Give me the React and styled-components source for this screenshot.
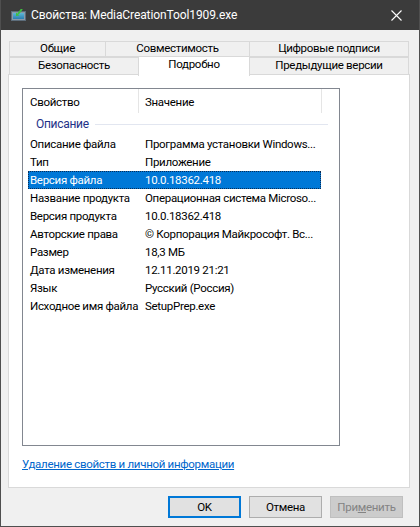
import React from "react";
import styled, { createGlobalStyle } from "styled-components";

const GlobalStyle = createGlobalStyle`
  html, body {
    margin: 0;
    padding: 0;
    background: #f0f0f0;
  }
  body {
    font-family: Roboto, "Noto Sans", sans-serif;
    font-size: 11.5px;
    letter-spacing: -0.3px;
    color: #000;
  }
`;

const Window = styled.div`
  width: 420px;
  height: 527px;
  box-sizing: border-box;
  border: 1px solid #4f4f4f;
  border-top: none;
  background: #f0f0f0;
  display: flex;
  flex-direction: column;
`;

const TitleBar = styled.div`
  height: 30px;
  flex-shrink: 0;
  background: #3b3b3b;
  display: flex;
  align-items: center;
  padding-left: 10px;
  color: #fff;
`;

const TitleText = styled.span`
  margin-left: 5px;
  font-size: 12px;
  letter-spacing: -0.1px;
  flex: 1;
`;

const CloseButton = styled.div`
  width: 46px;
  height: 30px;
  display: flex;
  align-items: center;
  justify-content: center;
`;

const Body = styled.div`
  padding: 11px 9px 0 7px;
  display: flex;
  flex-direction: column;
`;

const Tabs = styled.div`
  margin-left: 1px;
  width: 400px;
  display: flex;
  flex-direction: column;
`;

const TabRow = styled.div`
  display: flex;
  height: ${(p) => p.$h}px;
`;

const Tab = styled.div`
  box-sizing: border-box;
  width: ${(p) => p.$w}px;
  height: ${(p) => (p.$active ? p.$h + 2 : p.$h)}px;
  margin-top: ${(p) => (p.$active ? -1 : 0)}px;
  margin-right: -1px;
  border: 1px solid #d9d9d9;
  border-bottom: ${(p) => (p.$active ? "none" : "1px solid #d9d9d9")};
  background: ${(p) => (p.$active ? "#fff" : "#f0f0f0")};
  position: relative;
  z-index: ${(p) => (p.$active ? 2 : 1)};
  display: flex;
  align-items: center;
  justify-content: center;
  white-space: nowrap;
  line-height: 1;
  padding-bottom: ${(p) => (p.$active ? 3 : 1)}px;
`;

const Panel = styled.div`
  box-sizing: border-box;
  width: 402px;
  height: 414px;
  margin-top: -1px;
  border: 1px solid #d9d9d9;
  background: #fff;
  padding: 13px 0 0 13px;
  display: flex;
  flex-direction: column;
`;

const ListBox = styled.div`
  box-sizing: border-box;
  width: 318px;
  height: 358px;
  border: 1px solid #828790;
  background: #fff;
`;

const Header = styled.div`
  display: flex;
  height: 24px;
`;

const HeaderCell = styled.div`
  box-sizing: border-box;
  width: ${(p) => p.$w}px;
  padding-left: ${(p) => p.$pad}px;
  border-right: 1px solid #e5e5e5;
  display: flex;
  align-items: center;
  padding-top: 2px;
`;

const GroupHeader = styled.div`
  height: 22px;
  display: flex;
  align-items: center;
  padding-left: 13px;
  padding-right: 11px;
  color: #1e3287;
  font-size: 12px;
`;

const GroupLine = styled.div`
  flex: 1;
  height: 1px;
  margin-left: 6px;
  background: #e2e6f0;
`;

const Row = styled.div`
  box-sizing: border-box;
  margin-left: 5px;
  width: 293px;
  height: 18px;
  display: flex;
  align-items: center;
  background: ${(p) => (p.$selected ? "#0078d7" : "transparent")};
  color: ${(p) => (p.$selected ? "#fff" : "#000")};
  outline: ${(p) => (p.$selected ? "1px dotted #0a2c55" : "none")};
  outline-offset: -1px;
`;

const Cell = styled.div`
  box-sizing: border-box;
  width: ${(p) => p.$w}px;
  flex-shrink: 0;
  padding-left: ${(p) => p.$pad}px;
  white-space: nowrap;
`;

const Link = styled.a`
  margin-top: 10px;
  color: #0066cc;
  text-decoration: underline;
  line-height: 16px;
  cursor: pointer;
`;

const Footer = styled.div`
  display: flex;
  justify-content: flex-end;
  gap: 8px;
  padding: 8px 7px 0 0;
`;

const Button = styled.button`
  box-sizing: border-box;
  width: 73px;
  height: 22px;
  font-family: inherit;
  font-size: 11.5px;
  letter-spacing: -0.3px;
  padding: 0;
  background: ${(p) => (p.$disabled ? "#cccccc" : "#e1e1e1")};
  color: ${(p) => (p.$disabled ? "#838383" : "#000")};
  border: ${(p) =>
    p.$default ? "2px solid #0078d7" : p.$disabled ? "1px solid #bfbfbf" : "1px solid #adadad"};
`;

const rows = [
  ["Описание файла", "Программа установки Windows..."],
  ["Тип", "Приложение"],
  ["Версия файла", "10.0.18362.418"],
  ["Название продукта", "Операционная система Microso..."],
  ["Версия продукта", "10.0.18362.418"],
  ["Авторские права", "© Корпорация Майкрософт. Вс..."],
  ["Размер", "18,3 МБ"],
  ["Дата изменения", "12.11.2019 21:21"],
  ["Язык", "Русский (Россия)"],
  ["Исходное имя файла", "SetupPrep.exe"],
];

const AppIcon = () => (
  <svg width="15" height="12" viewBox="0 0 15 12">
    <defs>
      <linearGradient id="scr" x1="0" y1="0" x2="0" y2="1">
        <stop offset="0" stopColor="#5fb7d8" />
        <stop offset="1" stopColor="#2a7fb0" />
      </linearGradient>
    </defs>
    <rect x="0.5" y="2.5" width="14" height="9" fill="#8a9aa8" stroke="#5c6c7a" />
    <rect x="2" y="4" width="11" height="6" fill="url(#scr)" />
    <path d="M11 0 L7 5" stroke="#3fbf3f" strokeWidth="2" />
    <path d="M5 3.5 L8.5 6.5 L5 7 Z" fill="#3fbf3f" />
  </svg>
);

export default function App() {
  return (
    <>
      <GlobalStyle />
      <Window>
        <TitleBar>
          <AppIcon />
          <TitleText>Свойства: MediaCreationTool1909.exe</TitleText>
          <CloseButton>
            <svg width="11" height="11" viewBox="0 0 11 11">
              <path d="M0.5 0.5 L10.5 10.5 M10.5 0.5 L0.5 10.5" stroke="#fff" strokeWidth="1.1" />
            </svg>
          </CloseButton>
        </TitleBar>
        <Body>
          <Tabs>
            <TabRow $h={16}>
              <Tab $w={97} $h={16}>Общие</Tab>
              <Tab $w={145} $h={16}>Совместимость</Tab>
              <Tab $w={160} $h={16}>Цифровые подписи</Tab>
            </TabRow>
            <TabRow $h={18}>
              <Tab $w={130} $h={18}>Безопасность</Tab>
              <Tab $w={112} $h={18} $active>Подробно</Tab>
              <Tab $w={160} $h={18}>Предыдущие версии</Tab>
            </TabRow>
          </Tabs>
          <Panel>
            <ListBox>
              <Header>
                <HeaderCell $w={116} $pad={7}>Свойство</HeaderCell>
                <HeaderCell $w={183} $pad={6}>Значение</HeaderCell>
              </Header>
              <GroupHeader>
                Описание
                <GroupLine />
              </GroupHeader>
              {rows.map(([name, value], i) => (
                <Row key={name} $selected={i === 2}>
                  <Cell $w={110} $pad={2}>{name}</Cell>
                  <Cell $w={183} $pad={7}>{value}</Cell>
                </Row>
              ))}
            </ListBox>
            <Link>Удаление свойств и личной информации</Link>
          </Panel>
          <Footer>
            <Button $default>OK</Button>
            <Button>Отмена</Button>
            <Button $disabled>
              При<u>м</u>енить
            </Button>
          </Footer>
        </Body>
      </Window>
    </>
  );
}
